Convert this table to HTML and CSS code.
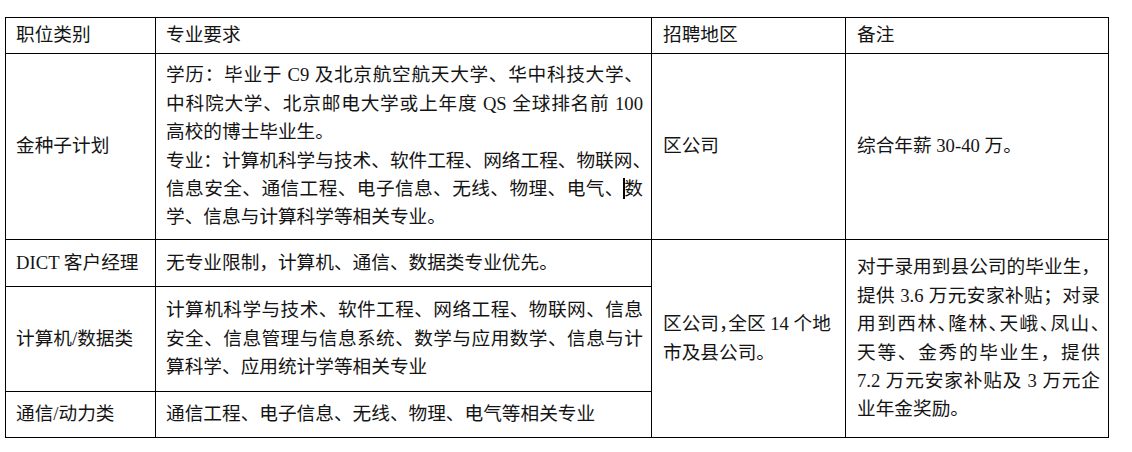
FILE: index.html
```html
<!DOCTYPE html>
<html lang="zh-CN">
<head>
<meta charset="utf-8">
<title>招聘岗位</title>
<link rel="stylesheet" href="styles.css">
</head>
<body>
<table class="jobs">
  <colgroup>
    <col class="c1">
    <col class="c2">
    <col class="c3">
    <col class="c4">
  </colgroup>
  <tr class="r-head">
    <td>职位类别</td>
    <td>专业要求</td>
    <td class="wide">招聘地区</td>
    <td class="wide">备注</td>
  </tr>
  <tr class="r-gold">
    <td>金种子计划</td>
    <td class="just">
      <span class="ln">学历：毕业于 C9 及北京航空航天大学、华中科技大学、</span>
      <span class="ln">中科院大学、北京邮电大学或上年度 QS 全球排名前 100</span>
      <span class="ln end">高校的博士毕业生。</span>
      <span class="ln">专业：计算机科学与技术、软件工程、网络工程、物联网、</span>
      <span class="ln">信息安全、通信工程、电子信息、无线、物理、电气、<span class="caret"></span>数</span>
      <span class="ln end">学、信息与计算科学等相关专业。</span>
    </td>
    <td class="wide">区公司</td>
    <td class="wide">综合年薪 30-40 万。</td>
  </tr>
  <tr class="r-dict">
    <td>DICT 客户经理</td>
    <td>无专业限制，计算机、通信、数据类专业优先。</td>
    <td class="wide" rowspan="3">
      <span class="ln">区公司<span class="p">，</span>全区 14 个地</span>
      <span class="ln">市及县公司。</span>
    </td>
    <td class="wide just" rowspan="3">
      <span class="ln">对于录用到县公司的毕业生，</span>
      <span class="ln">提供 3.6 万元安家补贴；对录</span>
      <span class="ln">用到西林<span class="p">、</span>隆林<span class="p">、</span>天峨<span class="p">、</span>凤山<span class="p">、</span></span>
      <span class="ln">天等、金秀的毕业生，提供</span>
      <span class="ln">7.2 万元安家补贴及 3 万元企</span>
      <span class="ln end">业年金奖励。</span>
    </td>
  </tr>
  <tr class="r-comp">
    <td>计算机/数据类</td>
    <td class="just">
      <span class="ln">计算机科学与技术、软件工程、网络工程、物联网、信息</span>
      <span class="ln">安全、信息管理与信息系统、数学与应用数学、信息与计</span>
      <span class="ln end">算科学、应用统计学等相关专业</span>
    </td>
  </tr>
  <tr class="r-tele">
    <td>通信/动力类</td>
    <td>通信工程、电子信息、无线、物理、电气等相关专业</td>
  </tr>
</table>
</body>
</html>
```

FILE: styles.css
```css
html, body {
  margin: 0;
  padding: 0;
  background: #fff;
}

body {
  padding: 17px 0 0 5px;
  font-family: "Liberation Serif", "Noto Sans CJK SC", serif;
  font-size: 18.67px;
  line-height: 28.4px;
  color: #141414;
}

.jobs {
  border-collapse: collapse;
  table-layout: fixed;
  width: 1103px;
}

.c1 { width: 150px; }
.c2 { width: 496px; }
.c3 { width: 194px; }
.c4 { width: 263px; }

.jobs td {
  border: 1px solid #000;
  padding: 0 8px 0 10px;
  vertical-align: middle;
  text-align: left;
  white-space: nowrap;
}

.jobs td.wide {
  padding-left: 11px;
}

.r-head { height: 36px; }
.r-gold { height: 186px; }
.r-dict { height: 47px; }
.r-comp { height: 105px; }
.r-tele { height: 46px; }

.ln {
  display: block;
}

.just .ln {
  text-align: justify;
  text-align-last: justify;
}

.just .ln.end {
  text-align-last: left;
}

.p {
  font-feature-settings: "halt";
}

.caret {
  display: inline-block;
  width: 2px;
  height: 21px;
  margin: 0 -1px;
  background: #000;
  vertical-align: -4px;
}
```
